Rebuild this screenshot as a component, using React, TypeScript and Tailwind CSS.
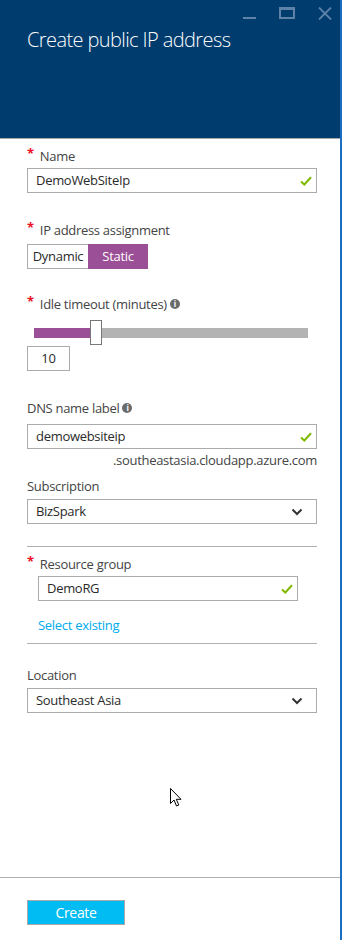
import React from "react";

const font = { fontFamily: '"Open Sans", "Noto Sans", sans-serif' };

function Check() {
  return (
    <svg width="12" height="10" viewBox="0 0 12 10" className="shrink-0">
      <path d="M1 5.5 L4.3 8.5 L11 1.2" fill="none" stroke="#7fba00" strokeWidth="2" />
    </svg>
  );
}

function Chevron() {
  return (
    <svg width="12" height="8" viewBox="0 0 12 8" className="shrink-0">
      <path d="M1.5 1.5 L6 6 L10.5 1.5" fill="none" stroke="#333" strokeWidth="2" />
    </svg>
  );
}

function Info() {
  return (
    <span className="ml-[3px] inline-flex h-[10px] w-[10px] items-center justify-center rounded-full bg-[#6b6b6b] text-[8px] font-bold leading-none text-white">
      i
    </span>
  );
}

function Label({ text, req, info, mt }: { text: string; req?: boolean; info?: boolean; mt: string }) {
  return (
    <div className={`flex h-[16px] items-center text-[13px] leading-[16px] text-[#444] ${mt}`}>
      {req && <span className="mr-[6px] -mt-[6px] text-[13px] font-bold text-[#e81123]">*</span>}
      <span>{text}</span>
      {info && <Info />}
    </div>
  );
}

function TextInput({ value, cls }: { value: string; cls: string }) {
  return (
    <div className={`flex h-[25px] items-center justify-between border border-[#ababab] pl-[8px] pr-[4px] text-[13px] text-[#2a2a2a] ${cls}`}>
      <span>{value}</span>
      <Check />
    </div>
  );
}

function Select({ value, cls }: { value: string; cls: string }) {
  return (
    <div className={`flex h-[25px] items-center justify-between border border-[#ababab] pl-[8px] pr-[13px] text-[13px] text-[#2a2a2a] ${cls}`}>
      <span>{value}</span>
      <Chevron />
    </div>
  );
}

export default function App() {
  return (
    <div className="relative flex h-[940px] w-[342px] flex-col overflow-hidden border-r-2 border-[#1b6ec2] bg-white tracking-[-0.3px]" style={font}>
      <div className="relative h-[139px] shrink-0 border-b border-[#a8a8a8] bg-[#003c6e] pl-[27px] pt-[26px]">
        <div className="text-[20px] font-light leading-[28px] tracking-[-0.6px] text-white">Create public IP address</div>
        <div className="absolute left-[243px] top-[17px] h-[2px] w-[13px] bg-[#5f82a8]" />
        <div className="absolute left-[279px] top-[7px] h-[12px] w-[16px] border-2 border-t-[3px] border-[#5f82a8]" />
        <svg className="absolute left-[318px] top-[7px]" width="14" height="13" viewBox="0 0 14 13">
          <path d="M1 0.5 L13 12.5 M13 0.5 L1 12.5" stroke="#5f82a8" strokeWidth="1.8" />
        </svg>
      </div>

      <div className="flex flex-1 flex-col pl-[27px] pr-[23px] pt-[9px]">
        <Label text="Name" req mt="" />
        <TextInput value="DemoWebSiteIp" cls="mt-[4px]" />

        <Label text="IP address assignment" req mt="mt-[29px]" />
        <div className="mt-[6px] flex h-[25px] w-[121px] text-[13px]">
          <div className="flex w-[61px] items-center justify-center border border-r-0 border-[#ababab] text-[#2a2a2a]">Dynamic</div>
          <div className="flex w-[60px] items-center justify-center bg-[#9b4f96] text-white">Static</div>
        </div>

        <Label text="Idle timeout (minutes)" req info mt="mt-[27px]" />
        <div className="relative mt-[8px] ml-[7px] flex h-[25px] w-[274px] items-center">
          <div className="h-[10px] w-[57px] bg-[#9b4f96]" />
          <div className="h-[10px] flex-1 bg-[#b3b3b3]" />
          <div className="absolute left-[56px] top-0 h-[25px] w-[12px] border border-[#777] bg-white" />
        </div>
        <div className="mt-[1px] flex h-[25px] w-[43px] items-center justify-center border border-[#ababab] text-[13px] text-[#2a2a2a]">10</div>

        <Label text="DNS name label" info mt="mt-[29px]" />
        <TextInput value="demowebsiteip" cls="mt-[8px]" />
        <div className="mt-[3px] h-[16px] text-right text-[13px] leading-[16px] text-[#444]">.southeastasia.cloudapp.azure.com</div>

        <Label text="Subscription" mt="mt-[10px]" />
        <Select value="BizSpark" cls="mt-[5px]" />

        <div className="mt-[22px] h-px bg-[#b0b0b0]" />

        <Label text="Resource group" req mt="mt-[9px]" />
        <TextInput value="DemoRG" cls="mt-[4px] ml-[11px] w-[260px]" />
        <div className="ml-[11px] mt-[16px] h-[16px] text-[13px] leading-[16px] text-[#00abec]">Select existing</div>

        <div className="mt-[10px] h-px bg-[#b0b0b0]" />

        <Label text="Location" mt="mt-[23px]" />
        <Select value="Southeast Asia" cls="mt-[5px]" />
      </div>

      <div className="h-[63px] shrink-0 border-t border-[#b0b0b0] pl-[27px] pt-[22px]">
        <div className="flex h-[25px] w-[98px] items-center justify-center border border-[#a8a8a8] bg-[#00bcf2] text-[14px] text-white">Create</div>
      </div>

      <svg className="absolute left-[170px] top-[788px]" width="13" height="20" viewBox="0 0 13 20">
        <path d="M0.5 0.5 L0.5 15.5 L4 12 L6.5 18 L8.8 17 L6.3 11.3 L11 11.3 Z" fill="white" stroke="black" strokeWidth="1" />
      </svg>
    </div>
  );
}
